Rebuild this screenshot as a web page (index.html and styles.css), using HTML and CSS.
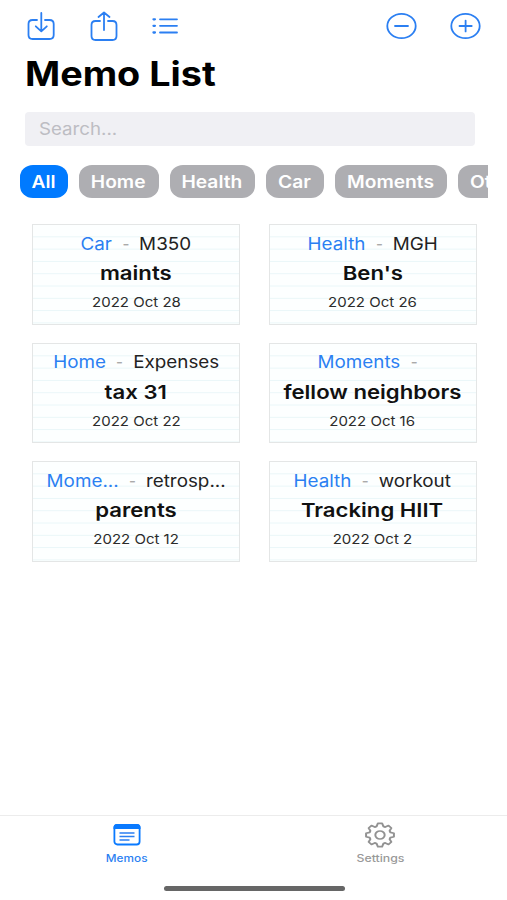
FILE: index.html
```html
<!DOCTYPE html>
<html lang="en">
<head>
<meta charset="utf-8">
<title>Memo List</title>
<link rel="stylesheet" href="styles.css">
</head>
<body>
<div class="app">
  <header class="toolbar">
    <svg class="icon" width="32" height="34" viewBox="0 0 32 34"><path d="M12 10H7.500Q3.500 10 3.500 14V25Q3.500 29 7.500 29H24.500Q28.700 29 28.700 25V14Q28.700 10 24.500 10H20M16.300 3V21M10.800 16.300L16.300 21.300L21.800 16.300"/></svg>
    <svg class="icon share" width="32" height="34" viewBox="0 0 32 34"><path d="M12 11H7.500Q3.500 11 3.500 15V26Q3.500 30 7.500 30H24.500Q28.500 30 28.500 26V15Q28.500 11 24.500 11H20M16 20V3M10.500 7L16 2.500L21.500 7"/></svg>
    <svg class="icon list" width="28" height="34" viewBox="0 0 28 34"><path d="M9 9.300H26M9 15.800H26M9 22.500H26"/><path class="dots" d="M2.500 9.300H3.900M2.500 15.800H3.900M2.500 22.500H3.900"/></svg>
    <svg class="icon minus" width="34" height="34" viewBox="0 0 34 34"><ellipse cx="17.500" cy="16" rx="14.200" ry="12.200"/><path d="M11 16H24"/></svg>
    <svg class="icon plus" width="34" height="34" viewBox="0 0 34 34"><ellipse cx="17.500" cy="16" rx="14.200" ry="12.200"/><path d="M11.500 16H23.700M17.600 10.600V21.400"/></svg>
  </header>
  <h1 class="heading"><span>Memo List</span></h1>
  <div class="search"><span>Search...</span></div>
  <nav class="filters">
    <button class="pill all"><span>All</span></button>
    <button class="pill home"><span>Home</span></button>
    <button class="pill health"><span>Health</span></button>
    <button class="pill car"><span>Car</span></button>
    <button class="pill moments"><span>Moments</span></button>
    <button class="pill other"><span>Other</span></button>
  </nav>
  <main class="grid">
    <article class="card"><div class="meta"><b>Car</b><i>-</i><span>M350</span></div><h2>maints</h2><time>2022 Oct 28</time></article>
    <article class="card"><div class="meta"><b>Health</b><i>-</i><span>MGH</span></div><h2>Ben's</h2><time>2022 Oct 26</time></article>
    <article class="card"><div class="meta"><b>Home</b><i>-</i><span>Expenses</span></div><h2>tax 31</h2><time>2022 Oct 22</time></article>
    <article class="card"><div class="meta"><b>Moments</b><i>-</i><span></span></div><h2>fellow neighbors</h2><time>2022 Oct 16</time></article>
    <article class="card"><div class="meta"><b>Mome...</b><i>-</i><span>retrosp...</span></div><h2>parents</h2><time>2022 Oct 12</time></article>
    <article class="card"><div class="meta"><b>Health</b><i>-</i><span>workout</span></div><h2>Tracking HIIT</h2><time>2022 Oct 2</time></article>
  </main>
  <footer class="tabs">
    <div class="tab active">
      <svg width="30" height="26" viewBox="0 0 30 26"><rect class="frame" x="2.400" y="3" width="25.200" height="19.500" rx="3"/><path class="bar" d="M1.500 7V5.500Q1.500 2 5 2H25Q28.500 2 28.500 5.500V7Z"/><path class="lines" d="M7.500 11H22.500M7.500 14.500H22.500M7.500 18H17.500"/></svg>
      <span>Memos</span>
    </div>
    <div class="tab">
      <svg class="gear" width="30" height="26" viewBox="-15 -13 30 26"><g transform="scale(1.17 1)"><path d="M-1.800 -11.700H1.800L2.900 -8.600L4.500 -7.900L7.300 -9.400L9.700 -7L8.200 -4.200L8.800 -2.600L11.900 -1.700V1.700L8.800 2.600L8.200 4.200L9.700 7L7.300 9.400L4.500 7.900L2.900 8.600L1.800 11.700H-1.800L-2.900 8.600L-4.500 7.900L-7.300 9.400L-9.700 7L-8.200 4.200L-8.800 2.600L-11.900 1.700V-1.700L-8.800 -2.600L-8.200 -4.200L-9.700 -7L-7.300 -9.400L-4.500 -7.900L-2.900 -8.600Z"/><circle r="4"/></g></svg>
      <span class="wide">Settings</span>
    </div>
  </footer>
  <div class="handle"></div>
</div>
</body>
</html>
```
FILE: styles.css
```css
* { box-sizing: border-box; }
body { margin: 0; background: #fff; font-family: Inter, "Liberation Sans", sans-serif; color: #000; }
.app { width: 507px; height: 900px; overflow: hidden; display: flex; flex-direction: column; }
.toolbar { display: flex; height: 44px; padding: 10px 25px 0; }
.icon { fill: none; stroke: #2b7ff2; stroke-width: 1.8; stroke-linecap: round; stroke-linejoin: round; flex: none; }
.share { margin-left: 31px; }
.list { margin-left: 31px; }
.dots { stroke-width: 2.3; }
.minus { margin-left: auto; }
.plus { margin-left: 30px; }
.heading { margin: 10.500px 0 0 25px; height: 38px; line-height: 38px; font-size: 33.500px; font-weight: 700; }
.heading span { display: inline-block; transform: scaleX(1.127); transform-origin: left; }
.search { margin: 19.500px 0 0 24.500px; width: 450px; height: 34px; padding-left: 14px; border-radius: 4px; background: #f0f0f4; color: #bdbdc3; font-size: 17px; line-height: 35px; }
.search span { display: inline-block; transform: scaleX(1.1); transform-origin: left; }
.filters { display: flex; gap: 11px; width: 468px; margin: 18.500px 0 0 20px; overflow: hidden; }
.pill { flex: none; height: 33px; border: 0; border-radius: 13px / 12px; padding: 0; background: #aeaeb2; color: #fff; font: 600 17px/34px Inter, "Liberation Sans", sans-serif; text-align: center; }
.pill span { display: inline-block; transform: scaleX(1.13); }
.all { width: 47.500px; background: #007aff; }
.home { width: 80px; }
.health { width: 85.500px; }
.car { width: 57.500px; }
.moments { width: 112.500px; }
.other { width: 77px; }
.grid { display: grid; grid-template-columns: 208px 208px; gap: 18px 28.500px; margin: 26.500px 0 0 32px; }
.card { height: 100.500px; border: 1px solid #e4e6e6; display: flex; flex-direction: column; align-items: center; padding-top: 6.500px; background: linear-gradient(transparent 11.300px, #e9f6f8 11.300px) 0 0 / 100% 12.300px #fdffff; white-space: nowrap; }
.meta { display: flex; gap: 9px; height: 24px; line-height: 24px; font-size: 17.300px; color: #222; transform: scaleX(1.09); }
.meta b { font-weight: 400; color: #2b7ff2; }
.meta i { font-style: normal; color: #aaa; width: 7px; text-align: center; transform: scaleX(0.8); }
.card h2 { margin: 5.500px 0 0; height: 26px; font-size: 19px; line-height: 26px; font-weight: 600; color: #111; transform: scaleX(1.165); }
.card time { margin-top: 7px; font-size: 13px; line-height: 16px; color: #2b2b2b; transform: scaleX(1.155); }
.tabs { display: flex; width: 507px; height: 60px; margin-top: 253px; border-top: 1px solid #ececec; flex: none; }
.tab { flex: 1; display: flex; flex-direction: column; align-items: center; padding-top: 6px; color: #999; font-size: 10px; line-height: 13px; font-weight: 500; }
.tab span { margin-top: 4px; transform: scaleX(1.18); }
.tab .wide { transform: scaleX(1.23); }
.active { color: #2b7ff2; }
.frame { fill: none; stroke: #0a7aff; stroke-width: 1.8; }
.bar { fill: #0a7aff; }
.lines { stroke: #2b7ff2; stroke-width: 1.4; }
.gear { fill: none; stroke: #929292; stroke-width: 1.7; stroke-linejoin: round; overflow: visible; }
.handle { width: 181px; height: 5px; margin: 11.500px 0 0 163.500px; border-radius: 3px; background: #666; flex: none; }
```
